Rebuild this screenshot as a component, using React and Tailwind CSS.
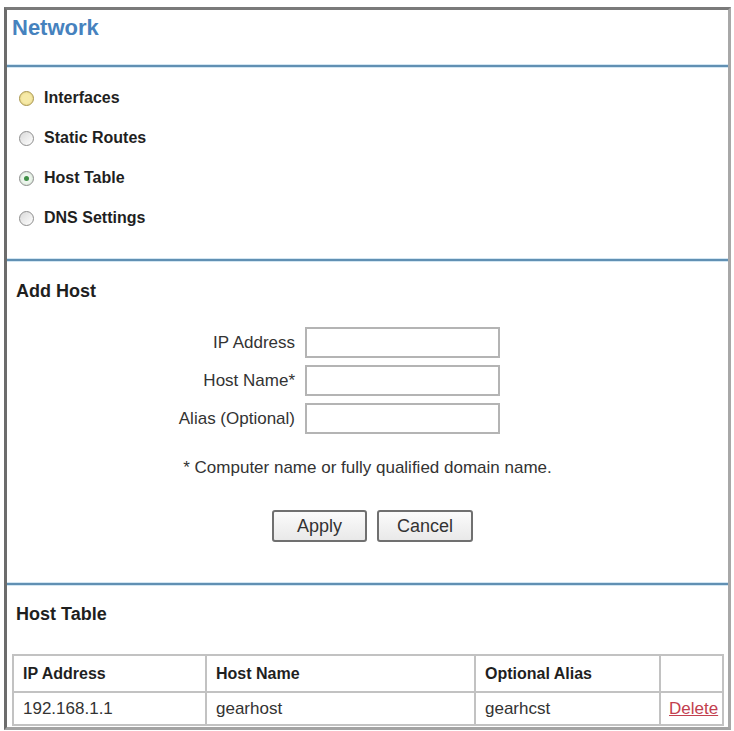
import React from "react";

const font = { fontFamily: '"Liberation Sans", Arial, sans-serif' };

function Divider() {
  return <div className="h-[4px] border-y border-[#d3e6f2] bg-[#6190b3]" />;
}

function Radio({ state }) {
  if (state === "hover") {
    return (
      <span className="flex h-[15px] w-[15px] items-center justify-center rounded-full border border-[#a8954e] bg-[#f6eaa8] shadow-[inset_0_0_2px_#d9c56e]" />
    );
  }
  if (state === "checked") {
    return (
      <span className="flex h-[15px] w-[15px] items-center justify-center rounded-full border border-[#8d8d8d] bg-[#eef5ee] shadow-[inset_0_0_2px_#b9d8b9]">
        <span className="h-[5px] w-[5px] rounded-full bg-[#3f8f46]" />
      </span>
    );
  }
  return (
    <span className="h-[15px] w-[15px] rounded-full border border-[#8d8d8d] bg-gradient-to-br from-[#d9d9d9] to-white" />
  );
}

const options = [
  { label: "Interfaces", state: "hover" },
  { label: "Static Routes", state: "off" },
  { label: "Host Table", state: "checked" },
  { label: "DNS Settings", state: "off" },
];

const fields = ["IP Address", "Host Name*", "Alias (Optional)"];

export default function App() {
  return (
    <div className="h-[731px] w-[734px] bg-white pl-[4px] pt-[7px]" style={font}>
      <div className="flex h-[723px] w-[727px] flex-col border-b-[3px] border-l-[3px] border-r-[3px] border-t-[3px] border-b-[#a3a3a3] border-l-[#6c6c6c] border-r-[#a8a8a8] border-t-[#7a7a7a]">
        {/* page title */}
        <div className="h-[54px] pl-[5px] pt-[7px]">
          <h1 className="text-[22px] font-bold leading-none text-[#4682be]">Network</h1>
        </div>
        <Divider />

        {/* section picker */}
        <div className="flex h-[190px] flex-col pl-[12px] pt-[10px]">
          {options.map((o) => (
            <label key={o.label} className="flex h-[40px] items-center gap-[10px]">
              <Radio state={o.state} />
              <span className="text-[16px] font-bold text-[#1f1f1f]">{o.label}</span>
            </label>
          ))}
        </div>
        <Divider />

        {/* add host form */}
        <div className="flex h-[320px] flex-col pt-[20px]">
          <h2 className="pl-[9px] text-[18px] font-bold leading-none text-[#1f1f1f]">Add Host</h2>
          <div className="mt-[27px] grid grid-cols-[288px_195px] gap-x-[10px] gap-y-[7px]">
            {fields.map((f) => (
              <React.Fragment key={f}>
                <span className="flex h-[31px] items-center justify-end text-[17px] text-[#333]">{f}</span>
                <input
                  type="text"
                  className="h-[31px] border-2 border-[#b4b4b4] bg-white outline-none"
                />
              </React.Fragment>
            ))}
          </div>
          <p className="mt-[24px] text-center text-[17px] leading-[20px] text-[#333]">
            * Computer name or fully qualified domain name.
          </p>
          <div className="mt-[32px] flex justify-center gap-[10px] pl-[10px]">
            <button className="h-[32px] w-[95px] rounded-[3px] border-2 border-[#707070] bg-gradient-to-b from-[#fbfbfb] to-[#e9e9e9] text-[18px] text-[#333]">
              Apply
            </button>
            <button className="h-[32px] w-[96px] rounded-[3px] border-2 border-[#707070] bg-gradient-to-b from-[#fbfbfb] to-[#e9e9e9] text-[18px] text-[#333]">
              Cancel
            </button>
          </div>
        </div>
        <Divider />

        {/* host table */}
        <div className="flex flex-1 flex-col pl-[5px] pt-[19px]">
          <h2 className="pl-[4px] text-[18px] font-bold leading-none text-[#1f1f1f]">Host Table</h2>
          <table className="mt-[31px] w-[710px] table-fixed border-collapse text-left text-[17px]">
            <colgroup>
              <col className="w-[193px]" />
              <col className="w-[269px]" />
              <col className="w-[185px]" />
              <col className="w-[63px]" />
            </colgroup>
            <thead>
              <tr className="h-[37px]">
                <th className="border-2 border-[#c2c2c2] pl-[9px] text-[16px] font-bold text-[#1f1f1f]">IP Address</th>
                <th className="border-2 border-[#c2c2c2] pl-[9px] text-[16px] font-bold text-[#1f1f1f]">Host Name</th>
                <th className="border-2 border-[#c2c2c2] pl-[9px] text-[16px] font-bold text-[#1f1f1f]">Optional Alias</th>
                <th className="border-2 border-[#c2c2c2]" />
              </tr>
            </thead>
            <tbody>
              <tr className="h-[33px]">
                <td className="border-2 border-[#c2c2c2] pl-[9px] text-[#333]">192.168.1.1</td>
                <td className="border-2 border-[#c2c2c2] pl-[9px] text-[#333]">gearhost</td>
                <td className="border-2 border-[#c2c2c2] pl-[9px] text-[#333]">gearhcst</td>
                <td className="border-2 border-[#c2c2c2] pl-[8px]">
                  <a href="#" className="text-[#c2404f] underline">Delete</a>
                </td>
              </tr>
            </tbody>
          </table>
        </div>
      </div>
    </div>
  );
}
